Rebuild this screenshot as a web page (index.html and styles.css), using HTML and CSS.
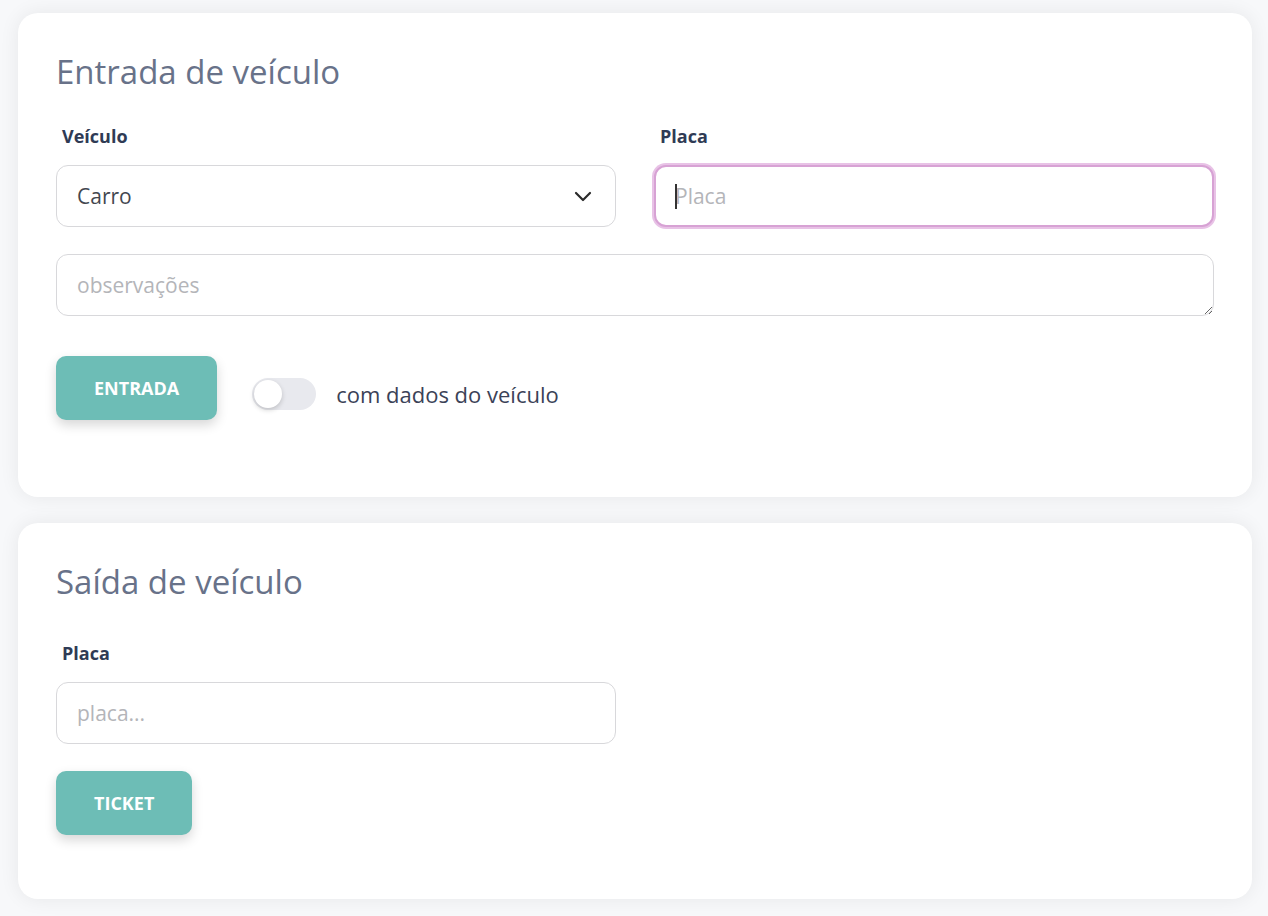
FILE: index.html
```html
<!DOCTYPE html>
<html lang="pt-BR">
<head>
    <meta charset="UTF-8">
    <meta name="viewport" content="width=device-width, initial-scale=1.0">
    <title>Estacionamento</title>
    <link rel="stylesheet" href="styles.css">
</head>
<body>
    <div class="page">
        <section class="card">
            <h2 class="card-title">Entrada de veículo</h2>
            <div class="row-two">
                <div class="field">
                    <label class="field-label" for="veiculo">Veículo</label>
                    <div class="select-wrap">
                        <select id="veiculo" class="control">
                            <option>Carro</option>
                            <option>Moto</option>
                        </select>
                        <svg class="chevron" width="18" height="11" viewBox="0 0 18 11">
                            <path d="M2 2 L9 9 L16 2" fill="none" stroke="#2b2b2b" stroke-width="2.2" stroke-linecap="round" stroke-linejoin="round"/>
                        </svg>
                    </div>
                </div>
                <div class="field">
                    <label class="field-label" for="placa">Placa</label>
                    <div class="input-wrap">
                        <input type="text" id="placa" class="control focused" placeholder="Placa">
                        <span class="caret"></span>
                    </div>
                </div>
            </div>
            <textarea class="control notes" rows="1" placeholder="observações"></textarea>
            <div class="actions">
                <button class="btn">Entrada</button>
                <label class="switch-row">
                    <span class="switch"><span class="knob"></span></span>
                    <span class="switch-text">com dados do veículo</span>
                </label>
            </div>
        </section>

        <section class="card card-exit">
            <h2 class="card-title">Saída de veículo</h2>
            <div class="field half">
                <label class="field-label" for="placa-saida">Placa</label>
                <input type="text" id="placa-saida" class="control" placeholder="placa...">
            </div>
            <button class="btn btn-ticket">Ticket</button>
        </section>
    </div>
</body>
</html>
```

FILE: styles.css
```css
body {
    margin: 0;
    background-color: #f7f8fa;
    font-family: "Open Sans", "Noto Sans", Arial, sans-serif;
    color: #3b4257;
}
.page {
    padding: 13px 16px 17px 18px;
}
.card {
    background: #fff;
    border-radius: 20px;
    padding: 39px 38px 77px 38px;
    box-shadow: 0 0 20px rgba(0, 0, 0, 0.07);
}
.card-exit {
    margin-top: 26px;
    padding-bottom: 64px;
}
.card-title {
    margin: 0;
    font-size: 33px;
    line-height: 40px;
    font-weight: 500;
    color: #687289;
}
.row-two {
    display: grid;
    grid-template-columns: 1fr 1fr;
    column-gap: 38px;
}
.field-label {
    display: block;
    margin: 32px 0 17px;
    padding-left: 6px;
    font-size: 18px;
    line-height: 24px;
    font-weight: 700;
    color: #2f3b55;
}
.card-exit .field-label {
    margin-top: 39px;
}
.control {
    display: block;
    width: 100%;
    box-sizing: border-box;
    height: 62px;
    padding: 0 20px;
    border: 1px solid #d8d8db;
    border-radius: 12px;
    background: #fff;
    font-family: inherit;
    font-size: 21px;
    color: #43474f;
    outline: none;
}
.control::placeholder {
    color: #b4b5b9;
}
select.control {
    -webkit-appearance: none;
    appearance: none;
}
.select-wrap,
.input-wrap {
    position: relative;
}
.chevron {
    position: absolute;
    right: 24px;
    top: 26px;
    pointer-events: none;
}
.control.focused {
    border: 2px solid #d7a2d4;
    padding-left: 19px;
    box-shadow: 0 0 0 2px #e8c2e6;
}
.caret {
    position: absolute;
    left: 21px;
    top: 19px;
    width: 1.5px;
    height: 25px;
    background: #333;
}
.notes {
    margin-top: 27px;
    padding-top: 16px;
    resize: vertical;
    font-size: 21px;
    line-height: 28px;
}
.actions {
    display: flex;
    align-items: flex-start;
    margin-top: 40px;
}
.btn {
    height: 64px;
    padding: 0 38px;
    border: none;
    border-radius: 10px;
    background-color: #6dbdb6;
    color: #fff;
    font-family: inherit;
    font-size: 18px;
    font-weight: 700;
    text-transform: uppercase;
    box-shadow: 0 5px 12px rgba(0, 0, 0, 0.16);
    cursor: pointer;
}
.btn-ticket {
    margin-top: 27px;
}
.switch-row {
    display: flex;
    align-items: center;
    height: 32px;
    margin: 22px 0 0 35px;
}
.switch {
    position: relative;
    width: 64px;
    height: 32px;
    border-radius: 16px;
    background: #e8e9ee;
}
.knob {
    position: absolute;
    left: 2px;
    top: 2px;
    width: 28px;
    height: 28px;
    border-radius: 50%;
    background: #fff;
    box-shadow: 0 2px 5px rgba(0, 0, 0, 0.18);
}
.switch-text {
    margin-left: 20px;
    font-size: 22px;
    line-height: 32px;
    color: #3b4257;
}
.half {
    width: calc(50% - 19px);
}
```
